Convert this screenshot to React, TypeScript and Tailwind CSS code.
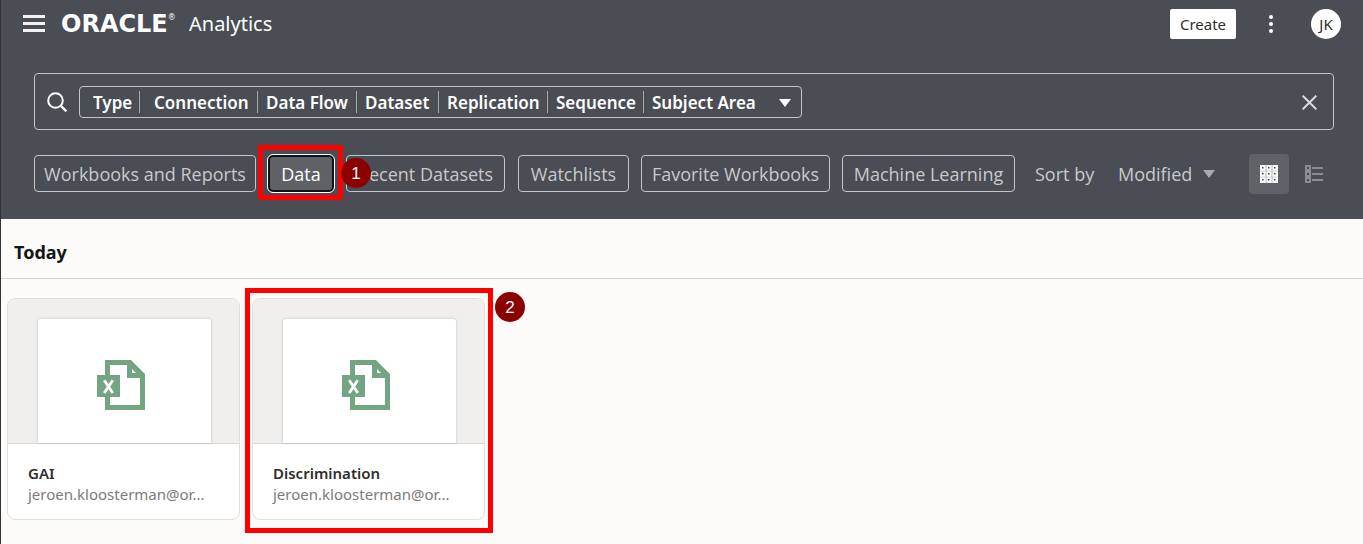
import React from "react";

const filters = [
  { label: "Type", box: "w-[60px] pl-[13px]" },
  { label: "Connection", box: "w-[118px] pl-[14px]" },
  { label: "Data Flow", box: "w-[99px] pl-2" },
  { label: "Dataset", box: "w-[82px] pl-2" },
  { label: "Replication", box: "w-[109px] pl-2" },
  { label: "Sequence", box: "w-[96px] pl-2" },
  { label: "Subject Area", box: "pl-2" },
];

const chipBase =
  "flex h-[37px] items-center justify-center whitespace-nowrap rounded border border-[#c4c5c7] font-['Open_Sans',sans-serif] text-[18px] leading-6 text-[#c8c9cb]";

const files = [
  { name: "GAI", owner: "jeroen.kloosterman@or...", marked: false },
  { name: "Discrimination", owner: "jeroen.kloosterman@or...", marked: true },
];

function Marker({ value, place }: { value: string; place: string }) {
  return (
    <span
      className={`pointer-events-none absolute z-20 flex size-[30px] items-center justify-center rounded-full bg-[#8b0000] font-['Liberation_Sans',sans-serif] text-[17px] leading-none text-white ${place}`}
    >
      {value}
    </span>
  );
}

function ExcelIcon() {
  return (
    <svg width="49" height="50" viewBox="0 0 49 50" fill="none" aria-hidden="true">
      <path
        fill="#74a583"
        fillRule="evenodd"
        d="M8 0H34L48 14V50H8V0ZM13 5V45H43V18H30V5ZM35 9V13H39Z"
      />
      <path fill="#74a583" d="M0 15H23V37H0Z" />
      <path d="M7.200 20.200L15.800 33M15.800 20.200L7.200 33" stroke="#fff" strokeWidth="2.800" />
    </svg>
  );
}

function FileCard({ name, owner, marked }: { name: string; owner: string; marked: boolean }) {
  return (
    <li className="relative w-[233px]">
      <a href="#" className="block overflow-hidden rounded-lg border border-[#e1dfdc] bg-white">
        <div className="flex h-[145px] items-end justify-center border-b border-[#d9d7d4] bg-[#f0efed] pl-[2px]">
          <div className="flex h-[124px] w-[173px] items-center justify-center rounded-t-[3px] bg-white pt-2 pr-[6px] shadow-[0_0_3px_rgba(0,0,0,0.2)]">
            <ExcelIcon />
          </div>
        </div>
        <div className="px-5 pt-[19px] pb-[14px]">
          <p className="text-[15px] leading-[21px] font-semibold text-[#312d2a]">{name}</p>
          <p className="text-[15px] leading-[21px] whitespace-nowrap text-[#7d7a77]">{owner}</p>
        </div>
      </a>
      {marked && (
        <>
          <span className="pointer-events-none absolute -top-[10px] -right-2 -bottom-[13px] -left-[7px] border-[5px] border-[#fe0000]" />
          <Marker value="2" place="-top-[6px] -right-10" />
        </>
      )}
    </li>
  );
}

export default function App() {
  return (
    <div className="min-h-screen border-l border-[#303236] bg-[#fcfbfa] font-['Noto_Sans',sans-serif]">
      <header className="bg-[#4a4d54] pb-[26px]">
        <div className="flex h-[47px] items-center pr-[22px] pl-[22px]">
          <button type="button" aria-label="Menu" className="flex flex-col gap-1">
            <span className="h-[3px] w-[22px] bg-[#f4f3f1]" />
            <span className="h-[3px] w-[22px] bg-[#f4f3f1]" />
            <span className="h-[3px] w-[22px] bg-[#f4f3f1]" />
          </button>
          <a href="#" className="ml-4 flex items-center text-white">
            <span className="flex w-[118px] items-start font-['DejaVu_Sans',sans-serif] text-[24px] leading-7 font-bold">
              ORACLE<span className="text-[8px] leading-4 font-normal">®</span>
            </span>
            <span className="ml-[10px] text-[20px] leading-7">Analytics</span>
          </a>
          <div className="ml-auto flex items-center">
            <button type="button" className="h-[30px] w-[66px] rounded-[2px] bg-white text-[15px] leading-5 text-[#312d2a]">
              Create
            </button>
            <button type="button" aria-label="More actions" className="ml-[33px] flex w-1 flex-col gap-[3px]">
              <span className="size-1 rounded-full bg-white" />
              <span className="size-1 rounded-full bg-white" />
              <span className="size-1 rounded-full bg-white" />
            </button>
            <button type="button" className="ml-[38px] size-[30px] rounded-full bg-white text-[15px] leading-5 text-[#312d2a]">
              JK
            </button>
          </div>
        </div>

        <div className="mt-[26px] mr-[29px] ml-[33px] flex h-[57px] items-center rounded border border-[#c4c5c7] pr-4 pl-3">
          <svg width="20" height="20" viewBox="0 0 20 20" fill="none" stroke="#fff" strokeWidth="2" aria-hidden="true">
            <circle cx="8.500" cy="8.500" r="7.300" />
            <path d="M13.500 13.500L19.300 19.300" strokeWidth="2.400" />
          </svg>
          <div className="ml-3 flex h-8 w-[723px] items-center rounded border border-[#c4c5c7] text-[17px] leading-[22px] font-semibold text-white">
            {filters.map((f, i) => (
              <button
                key={f.label}
                type="button"
                className={`h-[22px] pt-px text-left leading-[22px] whitespace-nowrap ${f.box} ${i < filters.length - 1 ? "border-r border-[#a9a8a8]" : ""}`}
              >
                {f.label}
              </button>
            ))}
            <button type="button" aria-label="More filters" className="mr-[10px] ml-auto pt-[2px]">
              <svg width="12" height="8" viewBox="0 0 12 8" fill="#fff">
                <path d="M0 0H12L6 8Z" />
              </svg>
            </button>
          </div>
          <button type="button" aria-label="Clear search" className="ml-auto pt-px">
            <svg width="15" height="15" viewBox="0 0 15 15" stroke="#d6dade" strokeWidth="2">
              <path d="M0.700 0.700L14.300 14.300M14.300 0.700L0.700 14.300" />
            </svg>
          </button>
        </div>

        <div className="mt-6 flex h-[39px] items-center pr-[40px] pl-[33px]">
          <button type="button" className={`${chipBase} w-[222px]`}>Workbooks and Reports</button>
          <div className="relative ml-[11px]">
            <button
              type="button"
              className="flex h-[39px] w-[68px] items-center justify-center rounded-md border border-white bg-[#5f6166] font-['Open_Sans',sans-serif] text-[18px] leading-6 text-white shadow-[inset_0_0_0_2px_#111]"
            >
              Data
            </button>
            <span className="pointer-events-none absolute -top-[9px] -right-2 -bottom-[7px] -left-[9px] border-[5px] border-[#fe0000]" />
            <Marker value="1" place="top-1 -right-9" />
          </div>
          <button type="button" className={`${chipBase} ml-[11px] w-[159px]`}>Recent Datasets</button>
          <button type="button" className={`${chipBase} ml-[13px] w-[111px]`}>Watchlists</button>
          <button type="button" className={`${chipBase} ml-3 w-[189px]`}>Favorite Workbooks</button>
          <button type="button" className={`${chipBase} ml-3 w-[173px]`}>Machine Learning</button>
          <span className="ml-5 w-[83px] whitespace-nowrap font-['Open_Sans',sans-serif] text-[18px] leading-6 text-[#c8c9cb]">Sort by</span>
          <button type="button" className="flex w-[97px] items-center justify-between font-['Open_Sans',sans-serif] text-[18px] leading-6 text-[#c8c9cb]">
            Modified
            <svg width="12" height="8" viewBox="0 0 12 8" fill="#a9abae" aria-hidden="true">
              <path d="M0 0H12L6 8Z" />
            </svg>
          </button>
          <button
            type="button"
            aria-label="Grid view"
            className="ml-auto flex size-10 items-center justify-center rounded bg-[#5f6267]"
          >
            <svg width="18" height="18" viewBox="0 0 18 18">
              <path fill="#fff" d="M0 0H18V18H0Z" />
              <path d="M6 0V18M12 0V18" stroke="#85878c" strokeWidth="0.600" />
              <path d="M0 6H18M0 12H18" stroke="#b4b5b9" strokeWidth="0.600" />
              {[3, 9, 15].map((y) =>
                [3, 9, 15].map((x) => <rect key={`${x}-${y}`} x={x - 1} y={y - 1} width="1.500" height="1.500" fill="#3c3f46" />)
              )}
            </svg>
          </button>
          <button type="button" aria-label="List view" className="ml-4">
            <svg width="18" height="18" viewBox="0 0 18 18" fill="none" stroke="#8b8d91">
              <path d="M1 1H5V5H1ZM1 7H5V11H1ZM1 13H5V17H1Z" strokeWidth="2" />
              <path d="M7 3H18M7 9H18M7 15H18" strokeWidth="2" />
            </svg>
          </button>
        </div>
      </header>

      <main>
        <h2 className="border-b border-[#d5d3d0] pt-[21px] pb-[14px] pl-[13px] text-[18px] leading-6 font-bold text-[#161513]">
          Today
        </h2>
        <ul className="mt-[19px] flex flex-wrap gap-3 pb-6 pl-[6px]">
          {files.map((f) => (
            <FileCard key={f.name} {...f} />
          ))}
        </ul>
      </main>
    </div>
  );
}
